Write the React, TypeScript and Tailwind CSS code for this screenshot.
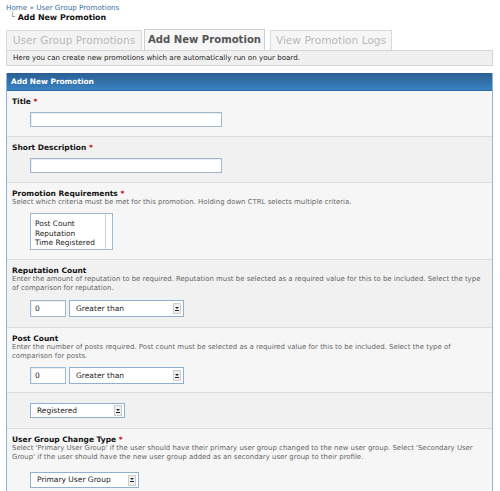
import React from 'react'

function Req() {
  return <span className="text-[#c00]"> *</span>
}

function TextBox({ w, h, value = '' }: { w: string; h: string; value?: string }) {
  return (
    <div
      className={`${w} ${h} bg-white border border-[#9fb9d3] shadow-[inset_1px_1px_1px_rgba(0,0,0,0.08)] flex items-center text-[7.5px] pl-[4px] text-[#222]`}
    >
      {value}
    </div>
  )
}

function Select({ w, h, label }: { w: string; h: string; label: string }) {
  return (
    <div
      className={`${w} ${h} bg-white border border-[#8fb0d0] flex items-center justify-between pl-[6px] pr-[2px] text-[7.5px] text-[#222]`}
    >
      <span>{label}</span>
      <span className="w-[8px] h-[11px] bg-[#efefef] border border-[#cdcdcd] flex flex-col items-center justify-center gap-[1px]">
        <svg width="4" height="2" viewBox="0 0 4 2">
          <path d="M0 0h4L2 2z" fill="#222" />
        </svg>
        <span className="w-[4px] h-[1px] bg-[#222]" />
      </span>
    </div>
  )
}

function Row({
  label,
  required,
  desc,
  alt,
  children,
  gap = 'mt-[6px]',
  className = 'pt-[6px] pb-[9px]',
}: {
  label?: string
  required?: boolean
  desc?: React.ReactNode
  alt?: boolean
  children: React.ReactNode
  gap?: string
  className?: string
}) {
  return (
    <div
      className={`${alt ? 'bg-[#f1f1f1]' : 'bg-[#f6f6f6]'} border-b border-[#dcdcdc] px-[5px] ${className}`}
    >
      {label && (
        <div className="text-[7.5px] leading-[9px] font-bold text-[#111] whitespace-nowrap">
          {label}
          {required && <Req />}
        </div>
      )}
      {desc && <div className="text-[6.95px] leading-[9px] text-[#666]">{desc}</div>}
      <div className={`pl-[18px] ${label ? gap : ''}`}>{children}</div>
    </div>
  )
}

export default function App() {
  return (
    <div
      className="w-[500px] h-[491px] overflow-hidden bg-white"
      style={{ fontFamily: '"DejaVu Sans", Verdana, sans-serif' }}
    >
      {/* breadcrumb */}
      <div className="pl-[6px] pt-[3px]">
        <div className="text-[7.2px] leading-[10px] text-[#3a6ea5]">
          Home <span className="text-[#666]">»</span> User Group Promotions
        </div>
        <div className="flex items-center text-[7.9px] leading-[10px] font-bold text-[#111] pl-[4px]">
          <span className="text-[#888] font-normal mr-[3px] -mt-[3px]">└</span>
          Add New Promotion
        </div>
      </div>

      {/* tabs */}
      <div className="flex items-end pl-[6px] mt-[6px] h-[21px]">
        <div className="h-[20px] w-[136px] bg-[#f3f3f3] border border-b-0 border-[#dadada] flex items-center justify-center text-[10.6px] text-[#b9b9b9]">
          User Group Promotions
        </div>
        <div className="h-[21px] w-[121px] ml-[2px] bg-[#f7f7f7] border border-b-0 border-[#cfcfcf] flex items-center justify-center text-[10.1px] font-bold text-[#555]">
          Add New Promotion
        </div>
        <div className="h-[20px] w-[122px] ml-[5px] bg-[#f6f6f6] border border-b-0 border-[#dadada] flex items-center justify-center text-[10.6px] text-[#b9b9b9]">
          View Promotion Logs
        </div>
      </div>
      <div className="ml-[6px] w-[487px] h-[16px] bg-[#f0f0f0] border border-[#d6d6d6] flex items-center pl-[6px] text-[7.1px] text-[#222]">
        Here you can create new promotions which are automatically run on your board.
      </div>

      {/* form */}
      <div className="ml-[6px] mt-[7px] w-[487px] border-l border-r border-[#8fb4da]">
        <div className="h-[18px] bg-gradient-to-b from-[#2b5f93] to-[#3a83c2] border-b border-[#2a6aa8] flex items-center pl-[4px] text-[7.4px] font-bold text-white">
          Add New Promotion
        </div>

        <Row label="Title" required>
          <TextBox w="w-[192px]" h="h-[15px]" />
        </Row>
        <Row label="Short Description" required alt>
          <TextBox w="w-[192px]" h="h-[15px]" />
        </Row>
        <Row
          label="Promotion Requirements"
          required
          desc="Select which criteria must be met for this promotion. Holding down CTRL selects multiple criteria."
        >
          <div className="w-[83px] h-[37px] bg-white border border-[#9fb9d3] flex">
            <div className="flex-1 pl-[4px] pt-[5px] text-[7.4px] leading-[9.5px] text-[#222] whitespace-nowrap overflow-hidden">
              <div>Post Count</div>
              <div>Reputation</div>
              <div>Time Registered</div>
            </div>
            <div className="w-[7px] border-l border-[#cfcfcf] bg-white" />
          </div>
        </Row>
        <Row
          label="Reputation Count"
          alt
          gap="mt-[7px]"
          className="pt-[6px] pb-[10px]"
          desc="Enter the amount of reputation to be required. Reputation must be selected as a required value for this to be included. Select the type of comparison for reputation."
        >
          <div className="flex items-center gap-[3px]">
            <TextBox w="w-[36px]" h="h-[17px]" value="0" />
            <Select w="w-[115px]" h="h-[17px]" label="Greater than" />
          </div>
        </Row>
        <Row
          label="Post Count"
          className="pt-[6px] pb-[8px]"
          desc="Enter the number of posts required. Post count must be selected as a required value for this to be included. Select the type of comparison for posts."
        >
          <div className="flex items-center gap-[3px]">
            <TextBox w="w-[36px]" h="h-[17px]" value="0" />
            <Select w="w-[115px]" h="h-[17px]" label="Greater than" />
          </div>
        </Row>
        <Row alt className="pt-[10px] pb-[10px]">
          <Select w="w-[95px]" h="h-[15px]" label="Registered" />
        </Row>
        <Row
          label="User Group Change Type"
          required
          gap="mt-[10px]"
          desc="Select 'Primary User Group' if the user should have their primary user group changed to the new user group. Select 'Secondary User Group' if the user should have the new user group added as an secondary user group to their profile."
        >
          <Select w="w-[109px]" h="h-[16px]" label="Primary User Group" />
        </Row>
      </div>
    </div>
  )
}
